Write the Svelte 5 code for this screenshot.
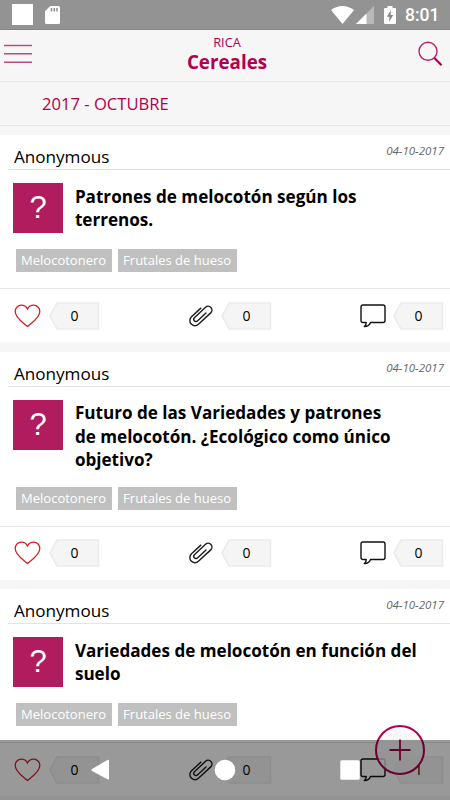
<script>
  const posts = [
    {
      id: 1,
      author: 'Anonymous',
      date: '04-10-2017',
      title: 'Patrones de melocotón según los terrenos.',
      tags: ['Melocotonero', 'Frutales de hueso'],
      likes: 0,
      files: 0,
      comments: 0
    },
    {
      id: 2,
      author: 'Anonymous',
      date: '04-10-2017',
      title: 'Futuro de las Variedades y patrones de\u00a0melocotón. ¿Ecológico como único objetivo?',
      tags: ['Melocotonero', 'Frutales de hueso'],
      likes: 0,
      files: 0,
      comments: 0
    },
    {
      id: 3,
      author: 'Anonymous',
      date: '04-10-2017',
      title: 'Variedades de melocotón en función del suelo',
      tags: ['Melocotonero', 'Frutales de hueso'],
      likes: 0,
      files: 0,
      comments: 1
    }
  ];
</script>

{#snippet counter(value)}
  <div class="counter">
    <svg width="51" height="28" viewBox="0 0 51 28">
      <path d="M8 1H49.5V27H8L1 14Z" fill="#f5f5f5" stroke="#ebebeb" stroke-width="1.6" />
    </svg>
    <span>{value}</span>
  </div>
{/snippet}

<div class="screen">
  <div class="status-bar">
    <div class="status-left">
      <span class="app-square"></span>
      <svg width="15" height="18" viewBox="0 0 15 18">
        <path d="M5.3 0H13.5Q15 0 15 1.5V16.5Q15 18 13.5 18H1.5Q0 18 0 16.5V5.3Z" fill="#fff" />
        <path d="M6.5 2V5.5M9.3 2V5.5M12 2V5.5" stroke="#939393" stroke-width="1.6" />
      </svg>
    </div>
    <div class="status-right">
      <svg class="wifi" width="23" height="18" viewBox="0 0 23 18">
        <path d="M0 4Q11.5 -4 23 4L11.5 18Z" fill="#fff" />
      </svg>
      <svg class="signal" width="18" height="18" viewBox="0 0 18 18">
        <path d="M18 0V18H0Z" fill="#b9b9b9" />
        <path d="M10.5 7.5V18H0Z" fill="#fff" />
      </svg>
      <svg class="battery" width="12" height="18" viewBox="0 0 12 18">
        <path d="M3.5 0H8.5V2H11Q12 2 12 3V17Q12 18 11 18H1Q0 18 0 17V3Q0 2 1 2H3.5Z" fill="#fff" />
        <path d="M7 4L2.8 10.8H5.5L5 16L9.2 9H6.5Z" fill="#858585" />
      </svg>
      <span class="clock">8:01</span>
    </div>
  </div>

  <header class="top-bar">
    <button class="icon-btn" aria-label="Menu">
      <svg width="28" height="20" viewBox="0 0 28 20">
        <path d="M0 1.5H28M0 9.8H28M0 18.2H28" stroke="#c2477f" stroke-width="1.4" />
      </svg>
    </button>
    <div class="heading">
      <div class="brand">RICA</div>
      <h1>Cereales</h1>
    </div>
    <button class="icon-btn" aria-label="Buscar">
      <svg width="25" height="26" viewBox="0 0 25 26">
        <circle cx="10" cy="10.3" r="9" fill="none" stroke="#b8256c" stroke-width="1.4" />
        <path d="M16.2 16.7L23.5 24.3" stroke="#b0005a" stroke-width="2.2" />
      </svg>
    </button>
  </header>

  <div class="month">2017 - OCTUBRE</div>

  <div class="posts">
    {#each posts as post (post.id)}
      <article class="post">
        <div class="post-header">
          <span class="author">{post.author}</span>
          <span class="date">{post.date}</span>
        </div>
        <div class="post-body">
          <div class="thumb">?</div>
          <h2>{post.title}</h2>
        </div>
        <div class="tags">
          {#each post.tags as tag}
            <span class="tag">{tag}</span>
          {/each}
        </div>
        <div class="actions">
          <div class="action">
            <svg width="28" height="24" viewBox="0 0 28 24">
              <path
                d="M13.5 22.5C9 18.5 1.2 14 1.2 7.5C1.2 3.8 4 1.2 7.2 1.2C10.2 1.2 12.3 2.7 13.5 5C14.7 2.7 16.8 1.2 19.8 1.2C23 1.2 25.8 3.8 25.8 7.5C25.8 14 18 18.5 13.5 22.5Z"
                fill="none"
                stroke="#cf2128"
                stroke-width="1.3"
              />
            </svg>
            {@render counter(post.likes)}
          </div>
          <div class="action">
            <svg width="26" height="24" viewBox="0 0 26 24">
              <g transform="translate(12.6 11.2) rotate(47)">
                <path
                  d="M2 -5.5V6.2A2.2 2.2 0 0 1 -2.4 6.2V-9A3.8 3.8 0 0 1 5.2 -9V7.8A5.1 5.1 0 0 1 -5 7.8V-5"
                  fill="none"
                  stroke="#1c1c1c"
                  stroke-width="1.4"
                  stroke-linecap="round"
                />
              </g>
            </svg>
            {@render counter(post.files)}
          </div>
          <div class="action">
            <svg width="26" height="24" viewBox="0 0 26 24">
              <path
                d="M3 1H23Q25 1 25 3V16.5Q25 18.5 23 18.5H10.5C9.6 21 7.5 22.6 4.3 22.5C6 21.4 6.3 20 6.2 18.5H3Q1 18.5 1 16.5V3Q1 1 3 1Z"
                fill="none"
                stroke="#111"
                stroke-width="1.4"
                stroke-linejoin="round"
              />
            </svg>
            {@render counter(post.comments)}
          </div>
        </div>
      </article>
    {/each}
  </div>

  <button class="add-btn" aria-label="Añadir">
    <svg width="50" height="50" viewBox="0 0 50 50">
      <circle cx="25" cy="25" r="24" fill="#f6f6f6" fill-opacity="0.8" stroke="#b0004f" stroke-width="2" />
      <path d="M14.5 25H35.5M25 14.5V35.5" stroke="#b0004f" stroke-width="1.8" />
    </svg>
  </button>

  <nav class="nav-bar">
    <svg width="450" height="60" viewBox="0 0 450 60">
      <path d="M109 20.5V38.5Q109 40 107.5 39.3L92 31Q91 30 92 29L107.5 20Q109 19.3 109 20.5Z" fill="#fff" />
      <circle cx="225" cy="30" r="10.3" fill="#fff" />
      <rect x="340.3" y="20.3" width="19.4" height="19.4" rx="1.5" fill="#fff" />
    </svg>
  </nav>
</div>

<style>
  :global(body) {
    margin: 0;
    overflow: hidden;
  }

  .screen {
    position: relative;
    width: 450px;
    height: 800px;
    overflow: hidden;
    background: #f6f6f6;
    font-family: 'Open Sans', sans-serif;
    color: #000;
  }

  .screen :global(svg) {
    display: block;
    flex-shrink: 0;
  }

  .status-bar {
    display: flex;
    justify-content: space-between;
    box-sizing: border-box;
    height: 30px;
    padding: 0 12px;
    background: #939393;
    border-bottom: 1px solid #858585;
  }

  .status-left,
  .status-right {
    display: flex;
    align-items: center;
  }

  .status-left {
    gap: 12px;
  }

  .app-square {
    width: 21px;
    height: 21px;
    background: #fff;
  }

  .signal {
    margin-left: 2px;
  }

  .battery {
    margin-left: 10px;
  }

  .clock {
    width: 33px;
    margin-left: 9px;
    font-family: Roboto, sans-serif;
    font-size: 17.5px;
    font-weight: 500;
    color: #fff;
  }

  .top-bar {
    display: flex;
    align-items: center;
    justify-content: space-between;
    box-sizing: border-box;
    height: 52px;
    padding: 0 7px 3px 4px;
    border-bottom: 1px solid #e6e6e6;
  }

  .icon-btn {
    padding: 0;
    border: none;
    background: none;
  }

  .heading {
    padding: 0 0 1px 4px;
    text-align: center;
    color: #b0004f;
  }

  .brand {
    font-size: 12.8px;
    line-height: 17px;
  }

  h1 {
    margin: 0;
    font-size: 18.8px;
    font-weight: 700;
    line-height: 23px;
  }

  .month {
    box-sizing: border-box;
    height: 44px;
    padding-left: 42px;
    border-bottom: 1px solid #e6e6e6;
    font-size: 16.6px;
    line-height: 44px;
    color: #b0004f;
  }

  .posts {
    display: flex;
    flex-direction: column;
    gap: 9.4px;
    padding-top: 9.2px;
  }

  .post {
    background: #fff;
  }

  .post-header {
    display: flex;
    justify-content: space-between;
    box-sizing: border-box;
    height: 35.1px;
    margin-left: 8px;
    padding: 0 6px;
    border-bottom: 1px solid #e3e3e3;
  }

  .author {
    font-size: 17.1px;
    line-height: 44px;
  }

  .date {
    font-size: 11.5px;
    font-style: italic;
    line-height: 31px;
    color: #666;
  }

  .post-body {
    display: flex;
    gap: 12.3px;
    padding: 13.1px 20px 0 12.6px;
  }

  .thumb {
    flex-shrink: 0;
    width: 50px;
    height: 50px;
    background: #b01c5e;
    font-family: 'Liberation Sans', sans-serif;
    font-size: 31px;
    line-height: 50px;
    text-align: center;
    text-indent: 1px;
    color: #fff;
  }

  h2 {
    max-width: 346px;
    margin: 0 0 -0.6px;
    padding-top: 1.3px;
    font-size: 17.1px;
    font-weight: 700;
    line-height: 23.4px;
  }

  .tags {
    display: flex;
    gap: 6px;
    padding: 15.9px 15.6px 16px;
  }

  .tag {
    padding: 0 5.5px;
    background: #c0c0c0;
    font-size: 13px;
    line-height: 23px;
    color: #fff;
  }

  .actions {
    display: flex;
    justify-content: space-between;
    align-items: center;
    box-sizing: border-box;
    height: 54px;
    padding: 0 6px 0 14px;
    border-top: 1px solid #e6e6e6;
  }

  .action {
    display: flex;
    align-items: center;
    gap: 7px;
  }

  .counter {
    display: grid;
    place-items: center;
  }

  .counter > * {
    grid-area: 1 / 1;
  }

  .counter span {
    font-size: 14px;
    line-height: 20px;
  }

  .add-btn {
    position: absolute;
    left: 375px;
    top: 725px;
    padding: 0;
    border: none;
    background: none;
  }

  .nav-bar {
    position: absolute;
    left: 0;
    bottom: 0;
    width: 450px;
    height: 60px;
    background: rgba(0, 0, 0, 0.4);
  }
</style>
